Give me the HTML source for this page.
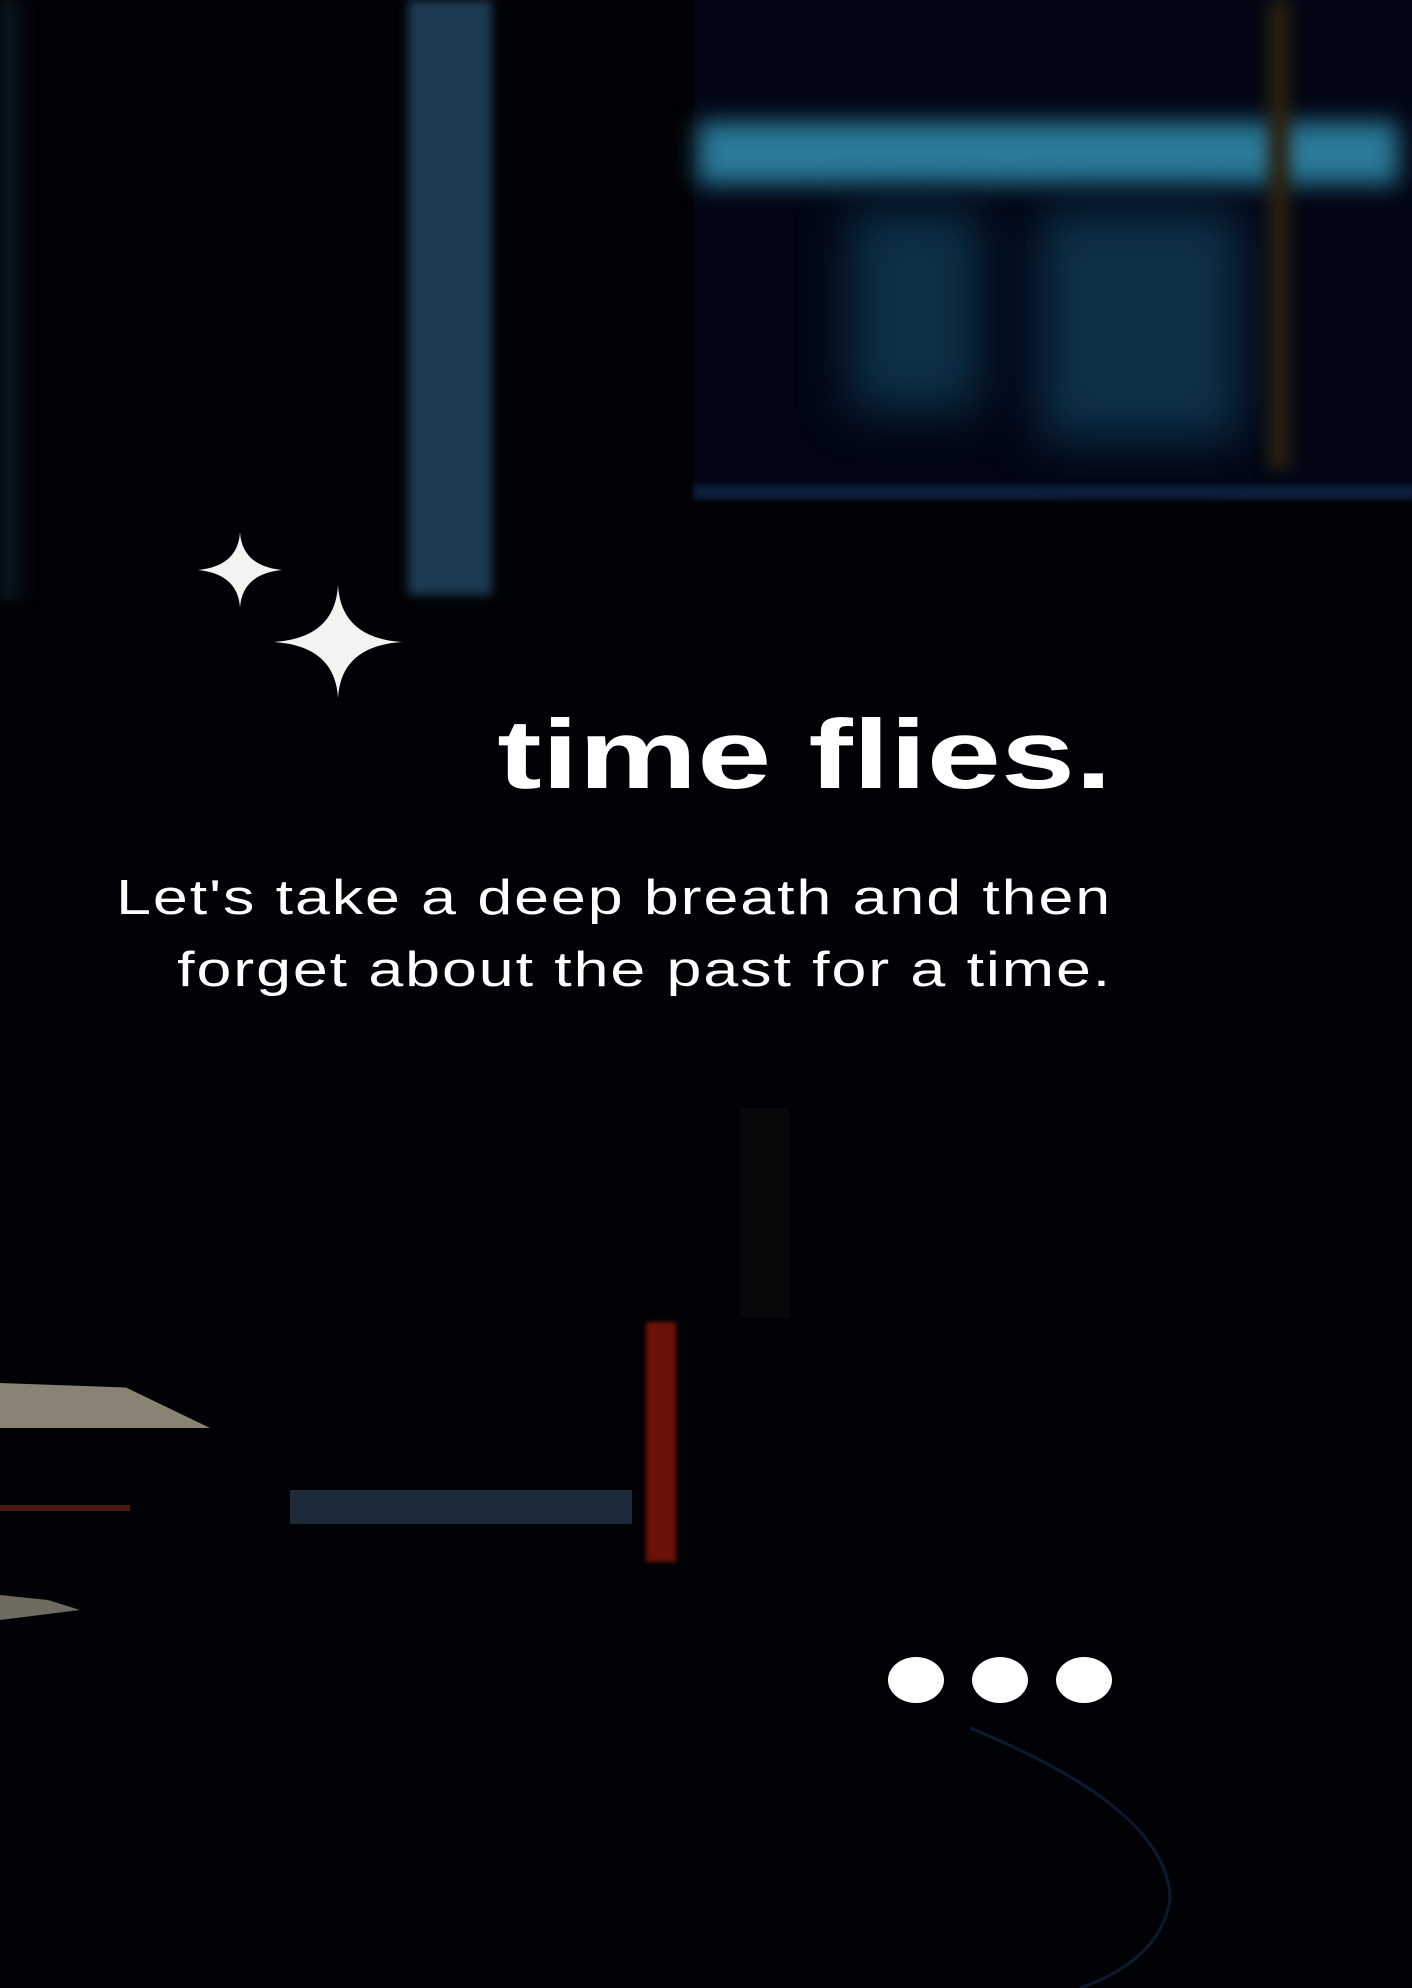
<!DOCTYPE html>
<html><head><meta charset="utf-8"><style>
html,body{margin:0;padding:0;background:#000;}
#c{position:relative;width:1412px;height:1988px;overflow:hidden;background:#010205;}
.a{position:absolute;}
.t{font-family:"Liberation Sans",sans-serif;color:#fff;position:absolute;white-space:nowrap;transform-origin:right top;}
</style></head><body><div id="c">
<div class="a" style="left:0;top:0;width:30px;height:600px;background:linear-gradient(90deg,#0a1c28,#020409);filter:blur(6px)"></div>
<div class="a" style="left:408px;top:0;width:84px;height:595px;background:#1d3a52;filter:blur(5px)"></div>
<div class="a" style="left:694px;top:0;width:720px;height:500px;background:#020614;"></div>
<div class="a" style="left:694px;top:485px;width:720px;height:14px;background:#0e1f3e;filter:blur(3px)"></div>
<div class="a" style="left:698px;top:122px;width:700px;height:62px;background:#2a7a98;filter:blur(12px)"></div>
<div class="a" style="left:850px;top:210px;width:130px;height:200px;background:#0c3046;filter:blur(24px)"></div>
<div class="a" style="left:1040px;top:210px;width:200px;height:230px;background:#0d3048;filter:blur(24px)"></div>
<div class="a" style="left:1268px;top:0;width:22px;height:470px;background:#2a2010;filter:blur(8px)"></div>
<div class="a" style="left:0;top:1383px;width:210px;height:45px;background:#8a8273;clip-path:polygon(0 0,60% 10%,100% 100%,0 100%)"></div>
<div class="a" style="left:0;top:1595px;width:80px;height:25px;background:#6f6a60;clip-path:polygon(0 0,60% 20%,100% 60%,0 100%)"></div>
<div class="a" style="left:290px;top:1490px;width:342px;height:34px;background:#1c2a3a;"></div>
<div class="a" style="left:0;top:1505px;width:130px;height:6px;background:#4a1a12;"></div>
<div class="a" style="left:646px;top:1322px;width:30px;height:240px;background:#6a1208;filter:blur(2px)"></div>
<div class="a" style="left:740px;top:1108px;width:50px;height:210px;background:#06080a;"></div>
<svg class="a" style="left:0;top:0" width="1412" height="1988">
<path d="M240 532 Q242 566 282 570 Q242 574 240 608 Q238 574 198 570 Q238 566 240 532Z" fill="#f3f3f1"/>
<path d="M338 585 Q341 638 402 642 Q341 646 338 698 Q335 646 274 642 Q335 638 338 585Z" fill="#f3f3f1"/>
<path d="M970 1728 Q1170 1810 1170 1900 Q1160 1960 1080 1988" stroke="#0c1a30" stroke-width="3" fill="none"/>
<ellipse cx="916" cy="1680" rx="28" ry="23" fill="#fff"/>
<ellipse cx="1000" cy="1680" rx="28" ry="23" fill="#fff"/>
<ellipse cx="1084" cy="1680" rx="28" ry="23" fill="#fff"/>
</svg>
<div class="t" style="right:300px;top:694px;font-size:98px;font-weight:bold;line-height:120px;transform:scaleX(1.36);">time flies.</div>
<div class="t" style="right:300px;top:862px;font-size:49px;line-height:72px;text-align:right;letter-spacing:1.5px;transform:scaleX(1.28);">Let's take a deep breath and then<br>forget about the past for a time.</div>
</div></body></html>
